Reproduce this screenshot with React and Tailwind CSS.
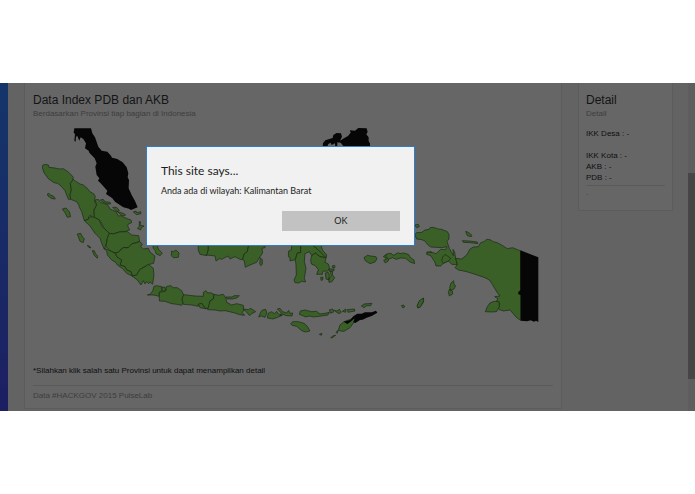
import React, { useState } from "react";

const GREEN = "#3a5f27";
const BLACK = "#060606";

// each region is traced in its own grid, 3 units to one map unit
const regions = [
    {
        origin: "translate(30 120) scale(0.3333)",
        green: [
            "M37 143L38 136 45 133 55 135 57 142 75 144 88 147 100 146 115 156 124 165 130 172 128 182 121 190 124 210 120 225 122 238 115 238 110 225 105 212 93 198 82 190 72 188 55 176 42 158Z",
            "M130 178L134 182 150 192 160 195 172 205 180 215 192 222 196 230 193 243 200 255 192 270 193 290 187 295 182 285 176 290 175 298 163 302 155 275 148 262 147 256 140 245 122 238 120 225 124 210 121 190Z",
            "M195 240L205 238 212 248 225 250 235 257 240 267 258 275 265 288 275 287 282 292 292 296 303 300 305 308 295 312 293 318 299 330 285 335 268 336 250 342 238 340 222 325 215 310 208 300 193 292 192 270 200 255Z",
            "M163 302L175 298 180 290 193 292 208 300 215 318 238 340 232 355 228 375 223 388 217 375 210 355 195 340 180 318Z",
            "M238 340L250 342 268 336 292 335 305 345 326 347 329 365 305 372 295 383 280 383 272 388 265 397 252 398 240 392 228 380 232 355Z",
            "M329 365L337 372 332 380 340 387 355 385 360 396 375 408 371 430 355 434 345 440 330 448 320 465 308 468 303 455 290 450 285 440 270 435 275 420 262 412 255 400 265 397 280 383 295 383 305 372Z",
            "M223 385L240 392 255 400 262 412 275 420 270 435 285 440 290 450 303 455 306 468 290 460 278 446 262 435 258 428 245 420 232 405 230 394Z",
            "M306 468L320 465 330 448 345 440 355 433 370 445 372 465 368 493 360 486 356 491 350 485 345 492 340 482 333 495 322 480Z",
            "M52 222L57 220 62 226 70 228 76 237 66 236 54 228Z",
            "M97 267L108 264 118 275 122 290 112 292 106 280Z",
            "M142 342L152 340 158 352 163 356 160 368 150 364Z",
            "M172 376L178 378 183 384 176 382ZM187 392L193 392 196 400 203 408 202 415 192 405Z",
            "M211 240L220 238 225 245 240 247 242 252 228 252ZM248 262L260 262 268 272 260 275ZM262 275L280 280 287 285 276 288Z",
            "M310 276L318 273 320 278 332 275 333 281 320 284ZM328 304L332 306 330 316 342 318 334 323 332 330 322 325 328 320Z",
        ],
        black: [
            "M133 25L183 25 187 40 195 52 205 80 215 92 232 95 243 107 246 113 262 117 278 127 290 142 295 160 293 172 297 180 296 205 305 225 315 243 323 262 303 270 297 266 280 262 255 245 247 235 228 222 232 212 212 190 204 182 208 175 200 165 196 140 200 130 194 115 178 98 176 92 165 85 168 70 160 57 152 52 148 62 142 48 138 50 137 65 133 62 135 42 131 38Z",
        ],
    },
    {
        origin: "translate(140 225) scale(0.3333)",
        green: [
            "M38 58L52 62 55 72 67 85 60 92 48 86 45 76 40 70Z",
            "M95 78L100 80 108 75 117 84 115 97 100 98 94 92Z",
            "M174 50L205 50 205 75 200 92 180 88 175 76Z",
            "M205 50L328 50 322 80 312 88 308 104 300 103 285 95 270 102 264 93 245 103 238 101 228 108 225 93 218 92 200 90 205 75Z",
            "M328 50L377 50 375 68 366 70 368 84 360 95 350 112 330 120 316 127 313 108 308 104 312 88 322 80Z",
            "M361 98L367 104 367 118 362 122 359 115Z",
            "M22 210L30 208 38 198 42 184 50 182 66 185 65 198 58 202 58 214 40 210Z",
            "M65 188L75 186 77 197 68 200Z",
            "M58 202L68 200 77 198 80 184 92 182 100 188 112 188 125 197 132 212 126 222 130 232 125 241 110 238 95 236 75 229 58 228Z",
            "M131 209L165 213 190 214 190 202 198 197 203 204 212 203 222 208 220 222 210 228 208 240 203 251 197 251 185 235 175 238 175 244 155 240 130 238 126 222Z",
            "M175 238L185 235 197 251 180 248Z",
            "M222 208L235 211 250 208 258 220 260 232 275 240 290 236 310 241 311 258 306 262 314 271 298 269 285 264 255 257 240 258 225 255 203 254 210 228 220 222Z",
            "M258 216L275 216 283 212 298 212 292 218 278 222 262 222Z",
            "M310 252L325 254 332 250 347 260 335 266 329 272 322 264Z",
            "M362 262L366 256 377 253 381 264 375 277 365 273 356 276Z",
            "M385 265L395 260 403 266 410 259 415 267 427 271 410 278 398 282 382 279Z",
            "M412 252L420 250 428 260 440 264 446 256 450 265 458 264 456 273 440 272 428 268 420 272 424 264Z",
        ],
        black: [],
    },
    {
        origin: "translate(270 225) scale(0.3333)",
        green: [
            "M65 62L80 50 92 58 92 83 82 84 76 104 60 108 60 97 55 95 56 78 64 75Z",
            "M92 58L117 50 130 62 145 75 165 85 168 98 150 95 136 84 125 92 118 80 105 86 103 110 108 130 103 160 107 171 95 169 86 174 75 173 72 165 79 150 78 120 76 104 82 84 92 83Z",
            "M117 50L153 62 158 76 170 90 168 98 145 75Z",
            "M125 92L136 84 150 95 168 98 165 112 175 117 179 130 172 139 159 138 157 148 140 148 145 134 136 122 124 117 122 105Z",
            "M166 144L175 142 178 150 177 165 168 162ZM180 138L188 140 187 150 194 158 186 170 177 172 176 160 184 154Z",
            "M152 157L159 156 158 165 153 166ZM186 123L194 121 195 128 189 129ZM176 132L192 132 192 137 178 139Z",
            "M282 98L292 91 302 93 318 95 321 102 315 111 300 116 286 107Z",
            "M340 95L350 87 356 94 355 108 346 114 341 106 350 102Z",
            "M346 92L355 85 365 86 370 91 385 83 390 86 400 84 415 88 422 98 432 105 434 116 420 111 407 100 392 99 378 103 368 98 355 103Z",
            "M88 268L91 258 105 255 125 260 140 259 150 267 165 265 178 262 174 270 155 273 130 276 118 273 108 276Z",
            "M178 255L188 252 192 260 182 265ZM193 256L201 258 208 253 214 262 207 266 200 262ZM217 259L228 252 227 262ZM232 254L253 252 255 258 234 262Z",
            "M274 243L282 237 306 235 302 242 290 242 282 248Z",
            "M62 296L68 290 85 290 102 295 112 304 120 318 107 321 95 317 80 304 66 301Z",
            "M148 328L156 325 154 331ZM182 338L190 332 197 331 186 339ZM198 322L204 316 202 325Z",
            "M205 316L210 300 222 290 238 284 254 279 253 290 240 308 222 319 212 318Z",
            "M394 242L401 240 404 246 399 249ZM443 240L450 227 461 220 460 232 450 246 443 249Z",
            "M470 82L484 80 484 88 473 88Z",
        ],
        black: ["M221 290L240 285 250 274 262 266 275 266 285 262 305 262 318 257 322 263 305 273 290 278 278 284 270 285 256 294 250 292 254 280 240 292 232 297Z"],
    },
    {
        origin: "translate(410 215) scale(0.3333)",
        green: [
            "M14 30L25 28 28 35 20 38Z",
            "M14 58L20 53 35 52 45 45 57 43 60 38 70 37 85 42 95 43 112 50 117 58 117 72 111 79 118 100 130 122 129 103 134 112 137 130 142 149 125 148 115 138 100 145 92 153 78 153 74 140 62 122 50 118 52 111 70 113 78 116 92 103 107 104 110 95 95 98 62 96 52 88 45 78 35 74 20 72Z",
            "M137 130L155 132 170 120 180 102 190 96 205 95 212 83 222 80 230 73 240 74 250 80 262 83 275 90 292 101 308 98 332 108 332 316 320 308 300 285 280 288 268 284 265 278 270 265 258 259 264 252 254 245 270 243 262 233 245 205 238 195 225 188 210 183 195 178 170 170 145 165 135 158 142 149Z",
            "M226 290L232 275 240 264 252 259 267 260 268 275 260 290 245 291Z",
            "M157 77L178 78 202 81 203 86 180 83 160 82Z",
            "M167 49L175 52 186 61 184 65 172 62Z",
            "M123 204L131 197 132 208 137 212 132 222 122 227 119 218ZM115 230L119 222 127 228 128 237 118 243Z",
            "M21 273L28 257 40 249 41 258 31 276 23 278Z",
            "M105 118L98 126 95 137 100 145 115 138 122 130Z",
        ],
        black: ["M331 106L385 127 385 321 378 317 372 320 362 316 352 319 332 317 332 240 325 238 325 231 331 226Z"],
    },
    {
        origin: "translate(140 120) scale(0.3333)",
        green: [],
        black: ["M548 84L549 70 556 61 578 54 580 45 590 39 603 40 606 50 600 62 612 55 624 48 632 38 630 31 645 32 655 24 680 25 683 36 679 43 686 52 686 64 690 70 690 84 615 84 602 68 592 67 592 79 586 80 585 70 575 75 572 68 565 72 560 84Z"],
    },
];

const IndonesiaMap = () => (
    <svg viewBox="33 122 520 240" className="mt-0.5 block w-full" role="img" aria-label="Peta Indonesia">
        {regions.map(({ origin, green, black }, index) => (
            <g key={index} transform={origin} strokeLinejoin="round">
                {green.map((d) => (
                    <path key={d} d={d} fill={GREEN} stroke="#1a2913" strokeWidth="2" />
                ))}
                {black.map((d) => (
                    <path key={d} d={d} fill={BLACK} />
                ))}
            </g>
        ))}
    </svg>
);

const Dialog = ({ onClose }) => (
    <div
        role="alertdialog"
        aria-labelledby="dialogTitle"
        className="absolute top-[63px] left-[21%] w-[269px] border border-[#2c7fc7] bg-[#f1f1f1] px-3.5 py-4 pb-3.5 font-[Lato,sans-serif] text-[#1c1c1c]"
    >
        <h2 id="dialogTitle" className="text-[12px] leading-4">This site says...</h2>
        <p className="mt-1 text-[9px] leading-4">Anda ada di wilayah: Kalimantan Barat</p>
        <div className="mt-3 flex justify-end">
            <button type="button" onClick={onClose} className="h-5 w-[118px] bg-[#c2c2c2] text-[9px] leading-5">
                OK
            </button>
        </div>
    </div>
);

const App = () => {
    const [open, setOpen] = useState(true);

    return (
        <div className="bg-white py-[83px] font-['Liberation_Sans',Arial,sans-serif]">
            <div className="relative flex bg-[#636363] text-[8px] text-[#0f0f0f]">
                <div className="w-2 shrink-0 bg-linear-to-b from-[#13356a] to-[#1c1f62]" />
                <main className="flex flex-1 items-start gap-4 pr-[15px] pl-4">
                    <section className="mb-0.5 flex-1 rounded-b-xs border border-t-0 border-[#5c5c5c] bg-[#666666] px-2 pt-2.5">
                        <h1 className="text-[12px] leading-[15px] text-[#141414]">Data Index PDB dan AKB</h1>
                        <p className="leading-3 text-[#3d3d3d]">Berdasarkan Provinsi tiap bagian di Indonesia</p>
                        <IndonesiaMap />
                        <p className="mt-[3px] leading-3">*Silahkan klik salah satu Provinsi untuk dapat menampilkan detail</p>
                        <hr className="mt-2 border-[#5a5a5a]" />
                        <p className="pt-0.5 pb-1 leading-4 text-[#3d3d3d]">Data #HACKGOV 2015 PulseLab</p>
                    </section>
                    <aside className="w-[95px] rounded-b-xs border border-t-0 border-[#5c5c5c] bg-[#666666] px-[7px] pt-2.5">
                        <h2 className="text-[12px] leading-[15px] text-[#141414]">Detail</h2>
                        <p className="leading-3 text-[#3d3d3d]">Detail</p>
                        <div className="mt-2 leading-[11px]">
                            <p>IKK Desa : -</p>
                            <p className="mt-[11px]">IKK Kota : -</p>
                            <p>AKB : -</p>
                            <p>PDB : -</p>
                        </div>
                        <hr className="mt-0.5 border-[#5a5a5a]" />
                        <p className="pt-0.5 pb-2.5 leading-3 text-[#4c4c4c]">-</p>
                    </aside>
                </main>
                <div className="flex w-[7px] shrink-0 flex-col bg-[#5e5e5e]">
                    <div className="h-[90px]" />
                    <div className="h-[206px] bg-[#464646]" />
                </div>
                {open && <Dialog onClose={() => setOpen(false)} />}
            </div>
        </div>
    );
};

export default App;
